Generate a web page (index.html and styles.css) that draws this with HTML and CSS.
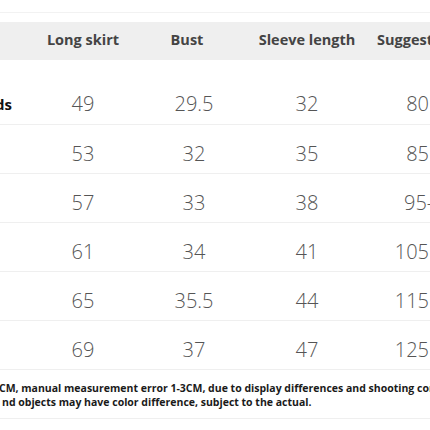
FILE: index.html
```html
<!DOCTYPE html>
<html lang="en">
<head>
    <meta charset="UTF-8">
    <meta name="viewport" content="width=device-width, initial-scale=1.0">
    <title>Size chart</title>
    <link rel="stylesheet" href="styles.css">
</head>
<body>
    <div class="chart">
        <div class="top-line"></div>

        <!-- Заголовок таблицы -->
        <div class="row head">
            <div class="cell"></div>
            <div class="cell">Long skirt</div>
            <div class="cell">Bust</div>
            <div class="cell">Sleeve length</div>
            <div class="cell last">Suggested height</div>
        </div>

        <!-- Размеры -->
        <div class="row first">
            <div class="cell name">Yards</div>
            <div class="cell">49</div>
            <div class="cell shift">29.5</div>
            <div class="cell">32</div>
            <div class="cell last">80</div>
        </div>
        <div class="row">
            <div class="cell name"></div>
            <div class="cell">53</div>
            <div class="cell shift">32</div>
            <div class="cell">35</div>
            <div class="cell last">85</div>
        </div>
        <div class="row">
            <div class="cell name"></div>
            <div class="cell">57</div>
            <div class="cell shift">33</div>
            <div class="cell">38</div>
            <div class="cell last"><span class="wide">95-100</span></div>
        </div>
        <div class="row">
            <div class="cell name"></div>
            <div class="cell">61</div>
            <div class="cell shift">34</div>
            <div class="cell">41</div>
            <div class="cell last">105</div>
        </div>
        <div class="row">
            <div class="cell name"></div>
            <div class="cell">65</div>
            <div class="cell shift">35.5</div>
            <div class="cell">44</div>
            <div class="cell last">115</div>
        </div>
        <div class="row">
            <div class="cell name"></div>
            <div class="cell">69</div>
            <div class="cell shift">37</div>
            <div class="cell">47</div>
            <div class="cell last">125</div>
        </div>

        <!-- Примечание -->
        <div class="note">
            <p class="line-one">CM, manual measurement error 1-3CM, due to display differences and shooting conditions, the pictures a</p>
            <p class="line-two">nd objects may have color difference, subject to the actual.</p>
        </div>
    </div>
</body>
</html>
```

FILE: styles.css
```css
body {
    margin: 0;
    background: #fff;
    font-family: "Open Sans", "Noto Sans", sans-serif;
    overflow: hidden;
}

.chart {
    width: 430px;
    overflow: hidden;
}

.top-line {
    height: 12px;
    border-bottom: 1px solid #f2f2f2;
    margin-bottom: 9px;
}

/* Строки таблицы */
.row {
    display: grid;
    grid-template-columns: 41px 84px 124px 116px 65px;
    height: 49px;
    box-sizing: border-box;
    border-bottom: 1px solid #efefef;
    align-items: start;
}

.cell {
    display: flex;
    justify-content: center;
    white-space: nowrap;
    padding-top: 17px;
    font-size: 20px;
    line-height: 24px;
    font-weight: 300;
    color: #555;
}

.row.first {
    height: 65px;
}

.row.first .cell {
    padding-top: 32px;
}

.row.head {
    height: 38px;
    background: #efefef;
    border-bottom: none;
}

.row.head .cell {
    padding-top: 8px;
    font-size: 14.5px;
    line-height: 20px;
    font-weight: 700;
    color: #444;
}

.row.head .cell.last {
    justify-content: flex-start;
    padding-left: 12px;
}

/* Первая колонка обрезана слева */
.cell.name {
    justify-content: flex-end;
    padding-right: 29px;
    font-size: 15px;
    font-weight: 700;
    color: #111;
}

.cell.shift {
    padding-left: 14px;
}

.cell.last {
    justify-content: flex-end;
    padding-right: 1px;
}

.wide {
    display: inline-block;
    width: 25px;
}

/* Примечание внизу */
.note {
    padding: 11px 0 9px;
    border-bottom: 1px solid #efefef;
    font-size: 10.5px;
    line-height: 14px;
    font-weight: 700;
    color: #1a1a1a;
}

.note p {
    margin: 0;
    white-space: nowrap;
}

.line-one {
    margin-left: -1px !important;
}

.line-two {
    margin-left: 2px !important;
}
```
